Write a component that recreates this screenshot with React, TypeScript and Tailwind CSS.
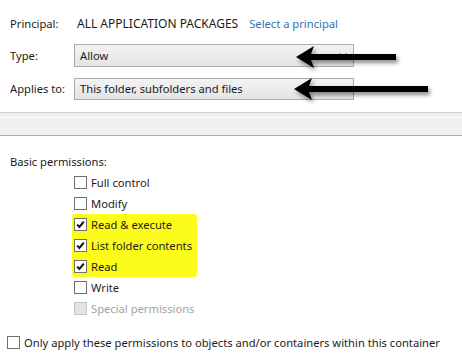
import React from "react";

function Box({ checked, disabled }: { checked?: boolean; disabled?: boolean }) {
  return (
    <span
      className={
        "relative inline-block w-[13px] h-[13px] shrink-0 border " +
        (disabled ? "border-[#c4c4c4] bg-[#e3e3e3]" : "border-[#707070] bg-white")
      }
    >
      {checked && (
        <svg viewBox="0 0 11 11" className="absolute left-0 top-0 w-[11px] h-[11px]">
          <path d="M2.2 5.6 L4.4 8 L8.8 2.6" fill="none" stroke="#111" strokeWidth="2" />
        </svg>
      )}
    </span>
  );
}

function Row({ label, checked, disabled }: { label: string; checked?: boolean; disabled?: boolean }) {
  return (
    <div className="h-[21px] flex items-center gap-[4px] whitespace-nowrap">
      <Box checked={checked} disabled={disabled} />
      <span className={disabled ? "text-[#a3a3a3]" : "text-[#1b1b1b]"}>{label}</span>
    </div>
  );
}

function Select({ value, h }: { value: string; h: string }) {
  return (
    <div
      className={
        "w-[280px] " +
        h +
        " border border-[#acacac] bg-gradient-to-b from-[#f3f3f3] to-[#e4e4e4] flex items-center pl-[5px] pr-[6px] justify-between"
      }
    >
      <span className="text-[#1b1b1b]">{value}</span>
      <svg viewBox="0 0 8 5" className="w-[8px] h-[5px]">
        <path d="M0.5 0.5 L4 4 L7.5 0.5" fill="none" stroke="#555" strokeWidth="1.2" />
      </svg>
    </div>
  );
}

function Arrow({ tail }: { tail: number }) {
  return (
    <svg width={tail + 10} height="30" className="overflow-visible" style={{ filter: "drop-shadow(2px 3px 2px rgba(0,0,0,0.45))" }}>
      <polygon points={`0,15 18,4 15,12 ${tail},12 ${tail},18 15,18 18,26`} fill="#000" />
    </svg>
  );
}

export default function App() {
  return (
    <div
      className="relative w-[462px] h-[364px] bg-white text-[11.2px] leading-none overflow-hidden"
      style={{ fontFamily: "'Noto Sans', 'Open Sans', sans-serif" }}
    >
      <div className="pt-[13px] px-[10px]">
        <div className="h-[22px] flex items-center whitespace-nowrap">
          <span className="w-[64px] text-[#1b1b1b]">Principal:</span>
          <span className="ml-[3px] text-[12px] text-[#1b1b1b]">ALL APPLICATION PACKAGES</span>
          <span className="ml-[11px] text-[#2f73b8]">Select a principal</span>
        </div>
        <div className="mt-[9px] flex items-center">
          <span className="w-[64px] text-[#1b1b1b]">Type:</span>
          <Select value="Allow" h="h-[23px]" />
        </div>
        <div className="mt-[11px] flex items-center">
          <span className="w-[64px] text-[#1b1b1b]">Applies to:</span>
          <Select value="This folder, subfolders and files" h="h-[22px]" />
        </div>
      </div>

      <div className="mt-[12px] h-[24px] border-t border-[#d2d2d2] border-b border-b-[#a9a9a9] bg-[#f0f0f0]">
        <div className="mt-[4px] border-t border-[#fafafa]" />
      </div>

      <div className="px-[10px] mt-[19px] h-[14px] flex items-center text-[#1b1b1b]">Basic permissions:</div>

      <div className="ml-[74px] mt-[3px]">
        <Row label="Full control" />
        <Row label="Modify" />
        <div className="-ml-[2px] pl-[2px] w-[125px] bg-[#fcfc1c] rounded-[3px]">
          <Row label="Read & execute" checked />
          <Row label="List folder contents" checked />
          <Row label="Read" checked />
        </div>
        <Row label="Write" />
        <Row label="Special permissions" disabled />
      </div>

      <div className="ml-[7px] mt-[13px] h-[21px] flex items-center gap-[4px] whitespace-nowrap">
        <Box />
        <span className="text-[#1b1b1b]">Only apply these permissions to objects and/or containers within this container</span>
      </div>

      <div className="absolute left-[296px] top-[42px]">
        <Arrow tail={100} />
      </div>
      <div className="absolute left-[294px] top-[74px]">
        <Arrow tail={134} />
      </div>
    </div>
  );
}
